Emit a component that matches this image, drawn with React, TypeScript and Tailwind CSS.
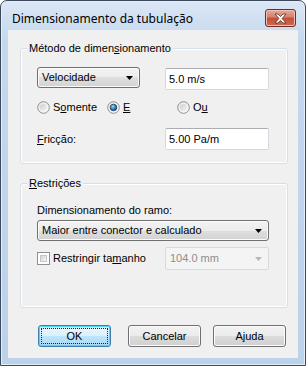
import React from "react";

const Arrow = ({ color = "#000" }: { color?: string }) => (
  <svg width="7" height="4" viewBox="0 0 7 4">
    <polygon points="0,0 7,0 3.5,4" fill={color} />
  </svg>
);

const Radio = ({ checked }: { checked?: boolean }) => (
  <svg width="13" height="13" viewBox="0 0 13 13">
    <defs>
      <linearGradient id="rOuter" x1="0" y1="0" x2="1" y2="1">
        <stop offset="0" stopColor="#e3e3e3" />
        <stop offset="1" stopColor="#ffffff" />
      </linearGradient>
      <linearGradient id="rInner" x1="0" y1="0" x2="1" y2="1">
        <stop offset="0" stopColor="#cfcfcf" />
        <stop offset="1" stopColor="#f4f4f4" />
      </linearGradient>
      <radialGradient id="rDot" cx="0.4" cy="0.35" r="0.7">
        <stop offset="0" stopColor="#9fdcfb" />
        <stop offset="0.55" stopColor="#2a7fc2" />
        <stop offset="1" stopColor="#12406e" />
      </radialGradient>
    </defs>
    <circle cx="6.5" cy="6.5" r="5.8" fill="url(#rOuter)" stroke="#8f8f8f" strokeWidth="1" />
    {checked ? (
      <circle cx="6.5" cy="6.5" r="3.3" fill="url(#rDot)" stroke="#1b3c63" strokeWidth="0.8" />
    ) : (
      <circle cx="6.5" cy="6.5" r="3.6" fill="url(#rInner)" />
    )}
  </svg>
);

const Checkbox = () => (
  <div className="w-[13px] h-[13px] border border-[#8e8f8f] bg-white p-[2px]">
    <div className="w-full h-full bg-gradient-to-br from-[#d4d4d4] to-[#f7f7f7] border border-[#c6c6c6]" />
  </div>
);

const Combo = ({ text, className }: { text: string; className: string }) => (
  <div
    className={`${className} h-[21px] flex items-center pl-[4px] pr-[6px] rounded-[3px] border border-[#707070] bg-[linear-gradient(#f3f3f3,#ececec_50%,#dfdfdf_50%,#d2d2d2)] shadow-[inset_0_0_0_1px_#fbfbfb]`}
  >
    <span className="flex-1">{text}</span>
    <Arrow />
  </div>
);

const TextBox = ({ text }: { text: string }) => (
  <div className="w-[104px] h-[22px] flex items-center pl-[3px] bg-white rounded-[2px] border border-[#d5d8dd] border-t-[#abadb3]">
    {text}
  </div>
);

const Button = ({ label, primary }: { label: string; primary?: boolean }) =>
  primary ? (
    <div className="w-[73px] h-[22px] rounded-[3px] border border-[#3c7fb1] bg-[linear-gradient(#eaf6fd,#d9f0fc_50%,#bee6fd_50%,#a7d9f5)] shadow-[inset_0_0_0_1px_#48d8fb] p-[2px]">
      <div className="w-full h-full flex items-center justify-center border border-dotted border-[#222]">{label}</div>
    </div>
  ) : (
    <div className="w-[73px] h-[22px] flex items-center justify-center rounded-[3px] border border-[#707070] bg-[linear-gradient(#f2f2f2,#ebebeb_50%,#dddddd_50%,#cfcfcf)] shadow-[inset_0_0_0_1px_#fcfcfc]">
      {label}
    </div>
  );

const CloseButton = () => (
  <div className="ml-auto mt-[8px] w-[31px] h-[18px] flex items-center justify-center rounded-[3px] border border-[#6d2d25] bg-[linear-gradient(#e9a99c,#d67f6d_45%,#c44e38_50%,#cf6a50)] shadow-[inset_0_0_0_1px_#f2c2b6]">
    <svg width="13" height="11" viewBox="0 0 13 11">
      <path
        d="M1 1 L4 1 L6.5 3.6 L9 1 L12 1 L8.1 5.5 L12 10 L9 10 L6.5 7.4 L4 10 L1 10 L4.9 5.5 Z"
        fill="#ffffff"
        stroke="#5a2a22"
        strokeWidth="0.8"
        strokeLinejoin="round"
      />
    </svg>
  </div>
);

export default function App() {
  return (
    <div className="w-[306px] h-[366px] font-['Liberation_Sans',Arial,sans-serif] text-[11px] leading-[13px] text-black">
      <div className="w-full h-full flex flex-col rounded-t-[7px] border border-[#3b4a5c] bg-[linear-gradient(#dbe7f5,#c4d8ee_40px,#bcd2ea)] shadow-[inset_0_0_0_1px_#e6eef8]">
        <div className="h-[29px] flex items-start pl-[11px] pr-[9px]">
          <span className="mt-[10px] font-['Noto_Sans',sans-serif] text-[12px] leading-[16px]">
            Dimensionamento da tubulação
          </span>
          <CloseButton />
        </div>

        <div className="flex-1 mx-[7px] mb-[7px] bg-[#f0f0f0] flex flex-col pl-[12px] pr-[10px] pt-[18px]">
          <div className="rounded-[3px] border border-[#d5dfe5] pl-[16px] pr-[18px] pb-[13px] shadow-[inset_0_0_0_1px_#ffffff]">
            <div className="-mt-[7px] -ml-[10px] w-fit px-[2px] bg-[#f0f0f0]">
              Método de dimen<u>s</u>ionamento
            </div>
            <div className="mt-[12px] h-[23px] flex items-start justify-between">
              <Combo text="Velocidade" className="w-[103px]" />
              <div className="mt-[1px]">
                <TextBox text="5.0 m/s" />
              </div>
            </div>
            <div className="mt-[9px] h-[16px] flex items-center">
              <div className="w-[70px] flex items-center gap-[3px]">
                <Radio />
                <span>
                  S<u>o</u>mente
                </span>
              </div>
              <div className="w-[70px] flex items-center gap-[3px]">
                <Radio checked />
                <span>
                  <u>E</u>
                </span>
              </div>
              <div className="flex items-center gap-[3px]">
                <Radio />
                <span>
                  O<u>u</u>
                </span>
              </div>
            </div>
            <div className="mt-[13px] h-[22px] flex items-center justify-between">
              <span>
                <u>F</u>ricção:
              </span>
              <TextBox text="5.00 Pa/m" />
            </div>
          </div>

          <div className="mt-[19px] rounded-[3px] border border-[#d5dfe5] pl-[16px] pr-[18px] pb-[37px] shadow-[inset_0_0_0_1px_#ffffff]">
            <div className="-mt-[7px] -ml-[10px] w-fit px-[2px] bg-[#f0f0f0]">
              <u>R</u>estrições
            </div>
            <div className="mt-[13px] h-[14px] flex items-center">Dimensionamento do ramo:</div>
            <div className="mt-[3px]">
              <Combo text="Maior entre conector e calculado" className="w-full" />
            </div>
            <div className="mt-[6px] h-[23px] flex items-center">
              <Checkbox />
              <span className="ml-[3px]">
                Restringir ta<u>m</u>anho
              </span>
              <div className="ml-auto w-[104px] h-[23px] flex items-center pl-[4px] pr-[6px] rounded-[2px] border border-[#d9d9d9] bg-[#f4f4f4] text-[#8d8d8d]">
                <span className="flex-1">104.0 mm</span>
                <Arrow color="#b8b8b8" />
              </div>
            </div>
          </div>

          <div className="mt-[17px] ml-[18px] flex">
            <Button label="OK" primary />
            <div className="ml-[17px]">
              <Button label="Cancelar" />
            </div>
            <div className="ml-[12px]">
              <Button label="Ajuda" />
            </div>
          </div>
        </div>
      </div>
    </div>
  );
}
